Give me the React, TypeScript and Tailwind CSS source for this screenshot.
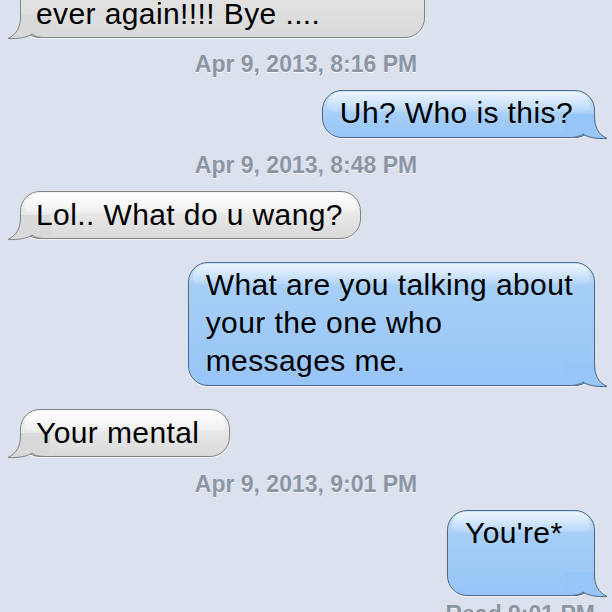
import React from 'react';
import clsx from 'clsx';

type Side = 'in' | 'out';

// tail drawn for the right-hand (sent) bubble, flipped for received ones
const Tail: React.FC<{ side: Side }> = ({ side }) => {
  const fill = side === 'out' ? '#97c5f6' : '#d9d9d9';
  const stroke = side === 'out' ? '#4f6784' : '#838383';
  return (
    <svg
      width="44"
      height="26"
      viewBox="0 0 44 26"
      className={clsx(
        'absolute bottom-[-3px]',
        side === 'out' ? 'right-[-15px]' : 'left-[-15px] -scale-x-100'
      )}
    >
      <path
        d="M0 0 H29.5 V2 C29.5 13 33 20 42 24.5 C32 25 23 23.5 18 20 C15 22.5 11 23.5 4 23.5 H0 Z"
        fill={fill}
      />
      <path
        d="M29.5 0 V2 C29.5 13 33 20 42 24.5 C32 25 23 23.5 18 20 C15 22.5 11 23.5 4 23.5 H0"
        fill="none"
        stroke={stroke}
        strokeWidth="1"
      />
    </svg>
  );
};

interface BubbleProps {
  side: Side;
  lines: string[];
  className?: string;
}

const Bubble: React.FC<BubbleProps> = ({ side, lines, className }) => (
  <div
    className={clsx(
      'relative rounded-[20px] border shadow-[0_1px_0_rgba(255,255,255,0.6)]',
      side === 'out'
        ? 'border-[#4f6784] pl-[17px] pr-[21px] pt-[3px] pb-[5px] bg-[linear-gradient(to_bottom,#cde5fc_0px,#a6cef8_24px,#97c5f6_100%)]'
        : 'border-[#838383] pl-[15px] pr-[17px] pt-[4px] pb-[4px] bg-[linear-gradient(to_bottom,#f8f8f8_0px,#e7e7e7_24px,#d9d9d9_100%)]',
      className
    )}
  >
    <div
      className={clsx(
        'absolute top-[1px] left-[4px] right-[4px] h-[20px] rounded-t-[18px] rounded-b-[8px] bg-linear-to-b',
        side === 'out' ? 'from-white/60 to-white/10' : 'from-white/80 to-white/20'
      )}
    />
    <p className="relative z-10 whitespace-nowrap text-[30px] leading-[38px] tracking-[0.4px] text-black">
      {lines.map((l, i) => (
        <React.Fragment key={i}>
          {i > 0 && <br />}
          {l}
        </React.Fragment>
      ))}
    </p>
    <Tail side={side} />
  </div>
);

const Stamp: React.FC<{ text: string; h: string }> = ({ text, h }) => (
  <div
    className={clsx(
      'flex items-center justify-center text-[23px] leading-[26px] font-bold text-[#8c95a4] [text-shadow:0_1px_0_rgba(255,255,255,0.8)]',
      h
    )}
  >
    {text}
  </div>
);

export default function App() {
  return (
    <div className="w-[612px] h-[612px] overflow-hidden bg-[#dbe2ed] font-['Liberation_Sans',Arial,sans-serif]">
      <div className="flex flex-col mt-[-48px]">
        <div className="flex justify-start pl-[20px]">
          <Bubble side="in" lines={['\u00a0', 'ever again!!!! Bye ....']} className="w-[405px]" />
        </div>
        <Stamp text="Apr 9, 2013, 8:16 PM" h="h-[52px]" />
        <div className="flex justify-end pr-[17px]">
          <Bubble side="out" lines={['Uh? Who is this?']} />
        </div>
        <Stamp text="Apr 9, 2013, 8:48 PM" h="h-[53px]" />
        <div className="flex justify-start pl-[20px]">
          <Bubble side="in" lines={['Lol.. What do u wang?']} />
        </div>
        <div className="flex justify-end pr-[17px] mt-[23px]">
          <Bubble
            side="out"
            lines={['What are you talking about', 'your the one who', 'messages me.']}
          />
        </div>
        <div className="flex justify-start pl-[20px] mt-[23px]">
          <Bubble side="in" lines={['Your mental']} className="w-[210px]" />
        </div>
        <Stamp text="Apr 9, 2013, 9:01 PM" h="h-[53px]" />
        <div className="flex justify-end pr-[17px]">
          <Bubble side="out" lines={["You're*", '\u00a0']} className="w-[148px]" />
        </div>
        <div className="mt-[5px] pr-[17px] text-right text-[23px] leading-[26px] font-bold text-[#8c95a4] [text-shadow:0_1px_0_rgba(255,255,255,0.8)]">
          Read 9:01 PM
        </div>
      </div>
    </div>
  );
}
